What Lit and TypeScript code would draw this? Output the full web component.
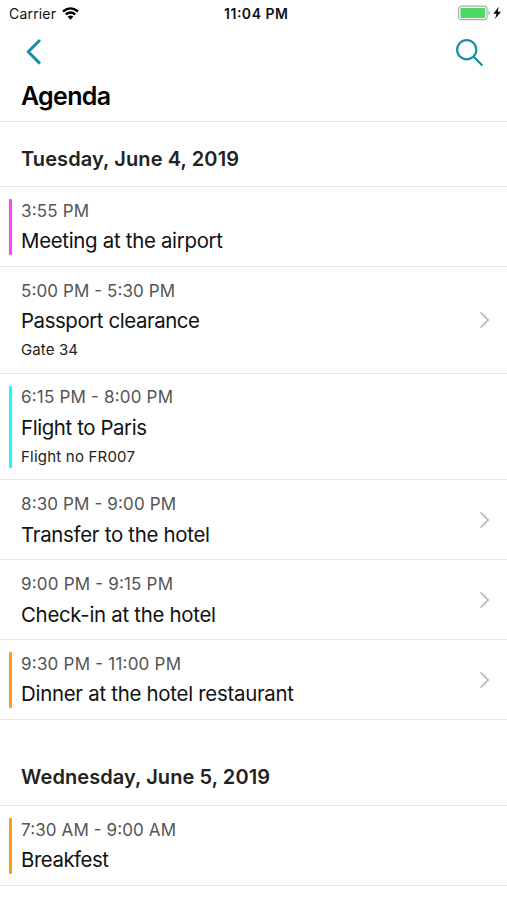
import { LitElement, html, css, nothing } from "lit";
import { customElement, property } from "lit/decorators.js";
import { styleMap } from "lit/directives/style-map.js";

interface AgendaEvent {
  time: string;
  timeWidth: number;
  title: string;
  titleWidth: number;
  note?: string;
  noteWidth?: number;
  color?: string;
  link?: boolean;
}

// Text set to an exact advance width.
const fitted = (text: string, width: number, size: number, weight = 400, color = "#111") => html`
  <svg class="fitted" width=${width + 4} height=${Math.round(size * 1.4)} style=${styleMap({ fontSize: size + "px" })}>
    <text x="0" y=${Math.round(size * 1.05)} textLength=${width} font-weight=${weight} fill=${color}>${text}</text>
  </svg>`;

const fittedStyles = css`
  .fitted { display: block; overflow: visible; font-family: Inter, "Liberation Sans", sans-serif; }
`;

@customElement("agenda-row")
export class AgendaRow extends LitElement {
  @property({ attribute: false }) event!: AgendaEvent;

  static styles = [fittedStyles, css`
    :host { display: block; }
    .row { display: flex; box-sizing: border-box; height: 79.8px; border-bottom: 1px solid #e6e6e6; padding: 12px 16px 11px 9px; }
    .tall { height: 106.8px; }
    .bar { width: 3px; flex: none; margin-right: 9px; border-radius: 1px; }
    .text { flex: 1; display: flex; flex-direction: column; margin-top: -0.2px; }
    .title { margin-top: 4.6px; }
    .note { margin-top: 3px; }
    .chevron { align-self: center; flex: none; }
  `];

  render() {
    const e = this.event;
    return html`<div class="row ${e.note ? "tall" : ""}">
      <div class="bar" style=${styleMap({ background: e.color ?? "transparent" })}></div>
      <div class="text">
        <div>${fitted(e.time, e.timeWidth, 17, 400, "#555")}</div>
        <div class="title">${fitted(e.title, e.titleWidth, 20.4)}</div>
        ${e.note ? html`<div class="note">${fitted(e.note, e.noteWidth!, 15, 400, "#222")}</div>` : nothing}
      </div>
      ${e.link ? html`<svg class="chevron" width="13" height="18" viewBox="0 0 13 18" fill="none" stroke="#bebebe" stroke-width="2"><path d="M2.6 1.4 10.2 9 2.6 16.6"/></svg>` : nothing}
    </div>`;
  }
}

const tuesday: AgendaEvent[] = [
  { time: "3:55 PM", timeWidth: 68, title: "Meeting at the airport", titleWidth: 202, color: "#f846f4" },
  { time: "5:00 PM - 5:30 PM", timeWidth: 154, title: "Passport clearance", titleWidth: 179, note: "Gate 34", noteWidth: 57, link: true },
  { time: "6:15 PM - 8:00 PM", timeWidth: 152, title: "Flight to Paris", titleWidth: 126, note: "Flight no FR007", noteWidth: 114, color: "#12fdfd" },
  { time: "8:30 PM - 9:00 PM", timeWidth: 155, title: "Transfer to the hotel", titleWidth: 189, link: true },
  { time: "9:00 PM - 9:15 PM", timeWidth: 152, title: "Check-in at the hotel", titleWidth: 195, link: true },
  { time: "9:30 PM - 11:00 PM", timeWidth: 160, title: "Dinner at the hotel restaurant", titleWidth: 273, color: "#ff9c14", link: true },
];
const wednesday: AgendaEvent[] = [
  { time: "7:30 AM - 9:00 AM", timeWidth: 155, title: "Breakfest", titleWidth: 88, color: "#ff9c14" },
];

@customElement("app-root")
export class AppRoot extends LitElement {
  static styles = [fittedStyles, css`
    :host { display: block; height: 900px; background: #fff; overflow: hidden; }
    .status { display: grid; grid-template-columns: 1fr auto 1fr; height: 28px; align-items: center; padding: 0 5px 0 9px; box-sizing: border-box; }
    .left, .right { display: flex; align-items: center; }
    .left { gap: 2px; }
    .right { justify-content: flex-end; }
    .battery { margin-bottom: 2px; }
    .wifi { margin-bottom: 2px; }
    .clock { margin-left: 4px; }
    .nav { display: flex; justify-content: space-between; align-items: center; height: 48px; padding: 0 22px 0 24px; }
    .heading { height: 46px; box-sizing: border-box; padding: 3px 21px 0; border-bottom: 1px solid #e6e6e6; }
    .day { height: 65px; box-sizing: border-box; padding: 23px 21px 0; border-bottom: 1px solid #e6e6e6; }
    .later { height: 86px; padding-top: 43px; }
  `];

  render() {
    return html`
      <div class="status">
        <div class="left">${fitted("Carrier", 47, 14)}
          <svg class="wifi" width="17" height="13" viewBox="0 0 17 13" fill="none" stroke="#000" stroke-width="2.3"><path d="M1 4.5Q8.5-1.8 16 4.5M3.7 7.5Q8.5 3.4 13.3 7.5"/><path d="M5.6 9.6Q8.5 7.2 11.4 9.6L8.5 12.7Z" fill="#000" stroke="none"/></svg>
        </div>
        <div class="clock">${fitted("11:04 PM", 64, 14, 600)}</div>
        <div class="right">
          <svg class="battery" width="44" height="16" viewBox="0 0 44 16">
            <rect x="0.6" y="1.1" width="28.4" height="13.6" rx="3" fill="#fff" stroke="#adadad" stroke-width="1.2"/>
            <rect x="2.4" y="2.9" width="24.8" height="10" rx="1" fill="#4cd964"/>
            <path d="M30.3 5.7Q32 6.3 32 7.9T30.3 10.1Z" fill="#adadad"/>
            <path d="M40.8 1.8 35.4 8.8H38.6L37 14 43 6.8H39.6Z" fill="#000"/>
          </svg>
        </div>
      </div>
      <div class="nav">
        <svg width="18" height="28" viewBox="0 0 18 28" fill="none" stroke="#168fa8" stroke-width="3"><path d="M16 2 4.3 13.8 16 25.6"/></svg>
        <svg width="30" height="30" viewBox="0 0 30 30" fill="none" stroke="#168fa8" stroke-width="2.2"><circle cx="11.7" cy="12.8" r="9.6"/><path d="M18.5 19.6 27.4 28.5"/></svg>
      </div>
      <div class="heading">${fitted("Agenda", 90, 25, 600, "#000")}</div>
      <div class="day">${fitted("Tuesday, June 4, 2019", 218, 20, 600, "#222")}</div>
      ${tuesday.map((e) => html`<agenda-row .event=${e}></agenda-row>`)}
      <div class="day later">${fitted("Wednesday, June 5, 2019", 249, 20, 600, "#222")}</div>
      ${wednesday.map((e) => html`<agenda-row .event=${e}></agenda-row>`)}
    `;
  }
}
